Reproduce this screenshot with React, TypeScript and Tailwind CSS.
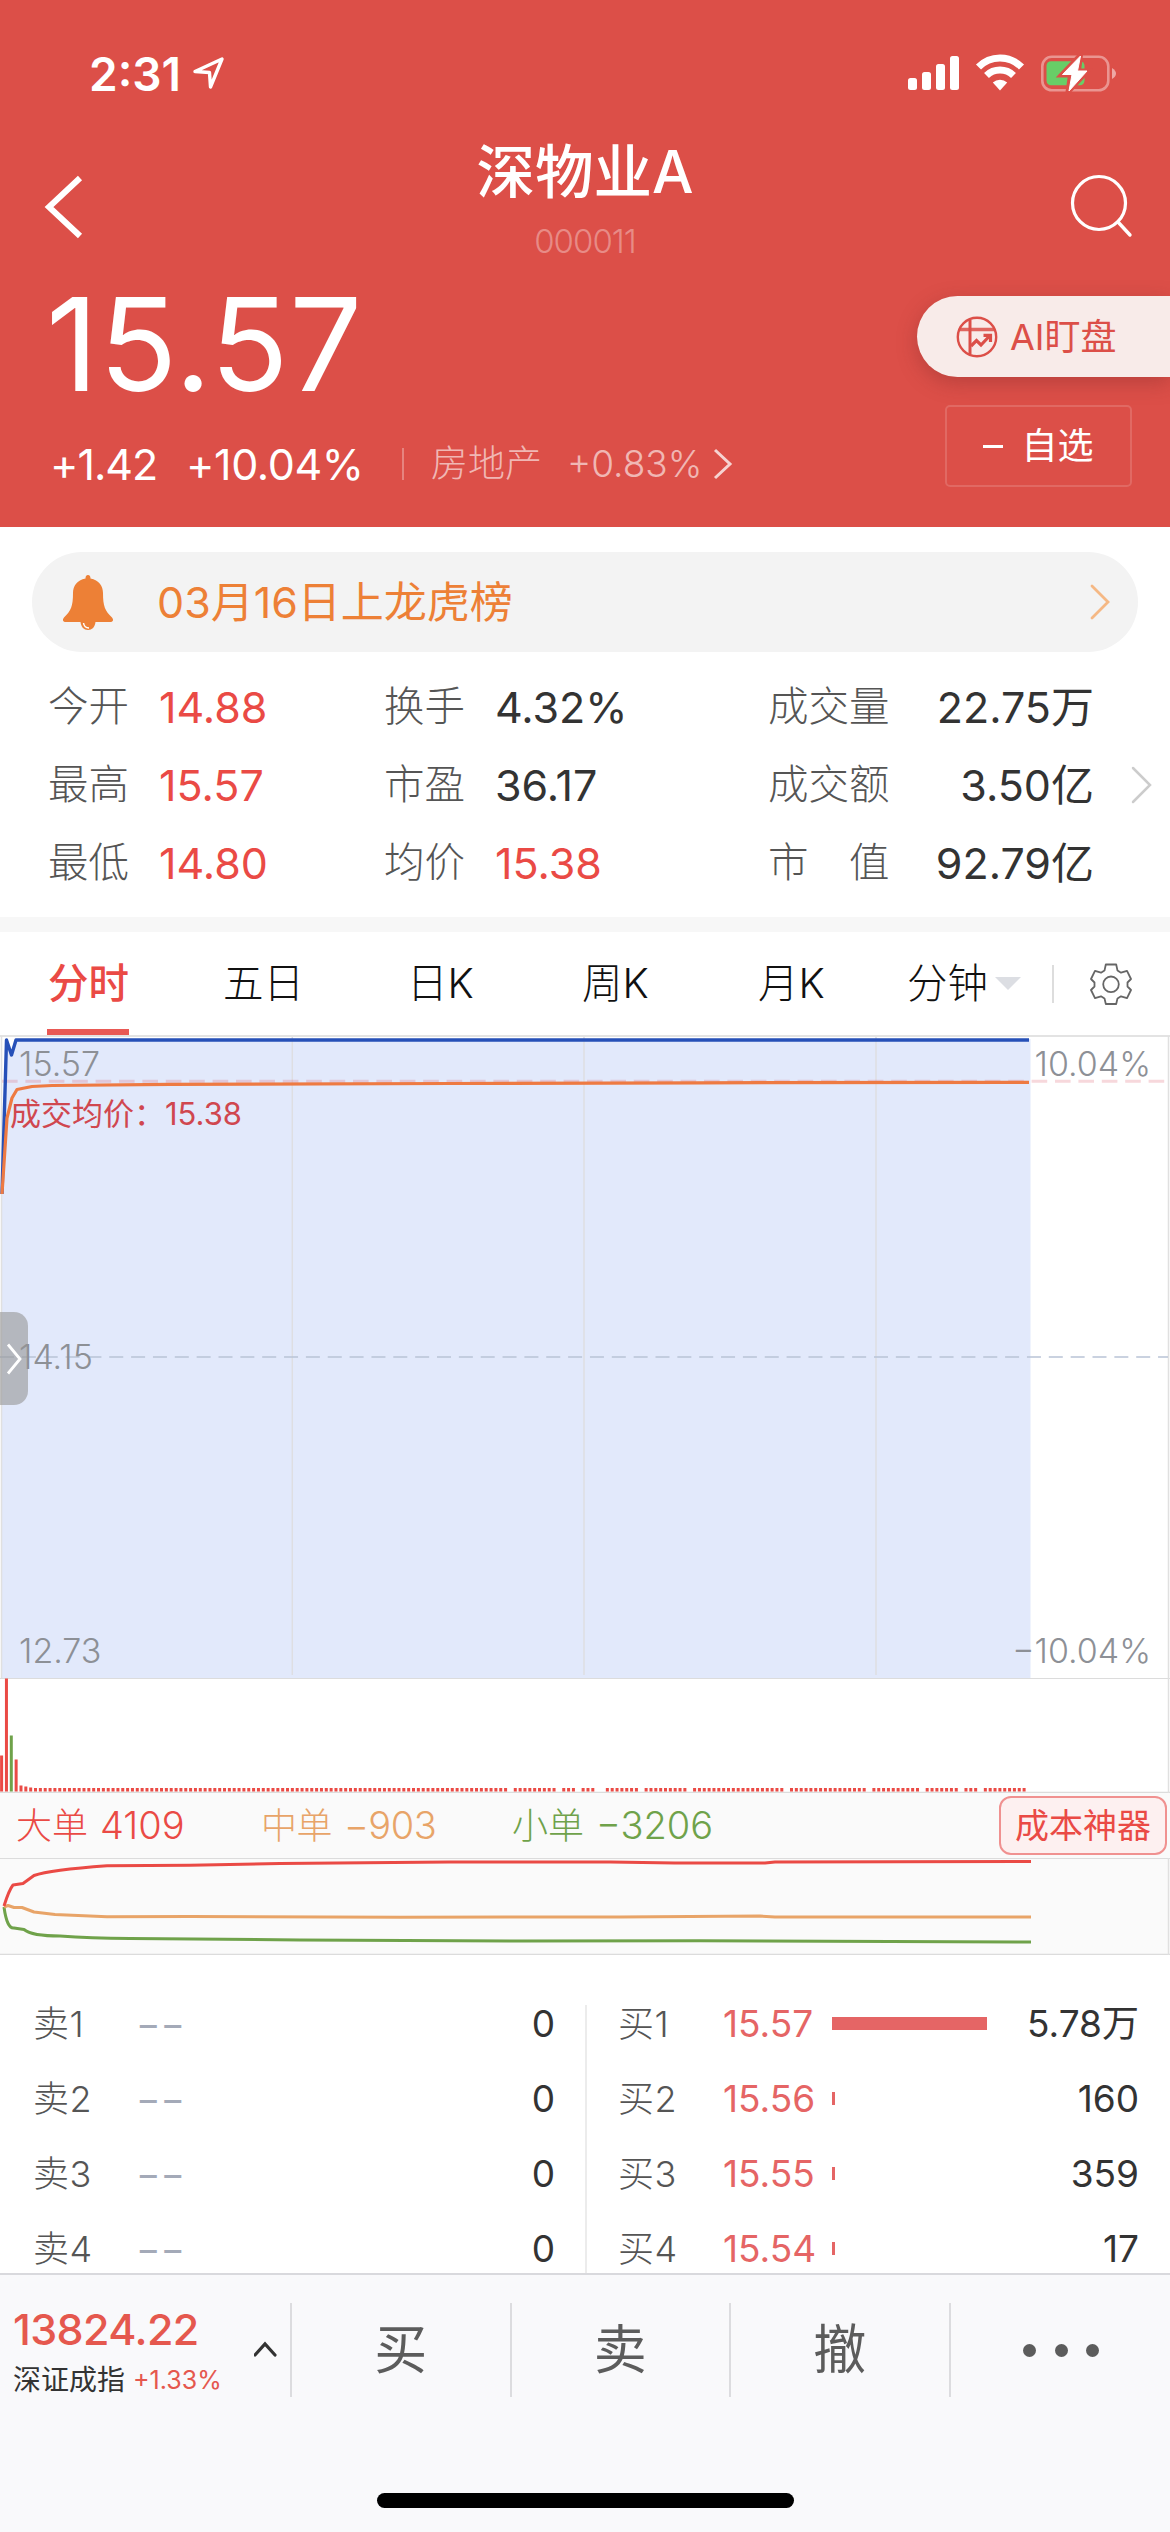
import type { ReactNode } from "react";

const RED = "#ea4a45";
const ORANGE = "#e8a468";
const GREEN = "#6fa24a";

const stats = [
  [
    { label: "今开", value: "14.88", up: true },
    { label: "最高", value: "15.57", up: true },
    { label: "最低", value: "14.80", up: true },
  ],
  [
    { label: "换手", value: "4.32%", up: false },
    { label: "市盈", value: "36.17", up: false },
    { label: "均价", value: "15.38", up: true },
  ],
];

const totals = [
  { label: "成交量", value: "22.75", unit: "万" },
  { label: "成交额", value: "3.50", unit: "亿" },
  { label: "市　值", value: "92.79", unit: "亿" },
];

const sells = ["卖1", "卖2", "卖3", "卖4"];

const buys = [
  { label: "买1", price: "15.57", volume: "5.78", unit: "万", bar: 155 },
  { label: "买2", price: "15.56", volume: "160", unit: "", bar: 3 },
  { label: "买3", price: "15.55", volume: "359", unit: "", bar: 3 },
  { label: "买4", price: "15.54", volume: "17", unit: "", bar: 3 },
];

// minutes without any trade
const emptyMinutes = [105, 115, 119, 123, 124, 132, 142, 162, 179, 190, 198, 202];
const openingBars = [
  { h: 36, color: RED },
  { h: 113, color: RED },
  { h: 56, color: GREEN },
  { h: 32, color: RED },
  { h: 6, color: RED },
  { h: 5, color: RED },
  { h: 4, color: RED },
];

function StatusBar() {
  return (
    <div className="flex h-[130px] items-start justify-between pt-[53px] pr-[53px] pl-[89px]">
      <div className="flex items-start">
        <span className="text-[46px] leading-[42px] font-semibold">2:31</span>
        <svg className="mt-[2px] ml-[11px]" width="34" height="38" viewBox="0 0 34 38" fill="none">
          <path
            d="M3 16.5 L30 4 L18.5 32 L17.5 17.5 Z"
            stroke="white"
            strokeWidth="3.4"
            strokeLinejoin="round"
          />
        </svg>
      </div>
      <div className="flex items-start pt-[1px]">
        <svg width="52" height="38" viewBox="0 0 52 38" fill="white">
          <rect x="0" y="24" width="9" height="12" rx="2.5" />
          <rect x="14" y="18" width="9" height="18" rx="2.5" />
          <rect x="28" y="10" width="9" height="26" rx="2.5" />
          <rect x="42" y="2" width="9" height="34" rx="2.5" />
        </svg>
        <svg className="ml-[15px]" width="50" height="38" viewBox="0 0 50 38">
          <path d="M3.5 13 A30 30 0 0 1 46.5 13" fill="none" stroke="white" strokeWidth="7" />
          <path d="M11.5 21.5 A19.5 19.5 0 0 1 38.5 21.5" fill="none" stroke="white" strokeWidth="7" />
          <path d="M17.8 28.5 A10.5 10.5 0 0 1 32.2 28.5 L25 36.5 Z" fill="white" />
        </svg>
        <svg className="ml-[16px]" width="76" height="38" viewBox="0 0 76 38">
          <rect x="1.3" y="2.8" width="66" height="33.5" rx="9.5" fill="none" stroke="white" strokeOpacity=".4" strokeWidth="2.6" />
          <path d="M71 14 Q75 16.5 75 19.5 Q75 22.5 71 25 Z" fill="white" fillOpacity=".5" />
          <rect x="5.5" y="7.3" width="38" height="24" rx="4.5" fill="#68ce67" />
          <path d="M39.5 1 L20.5 21 H29.5 L27 38 L46.5 17 H37.5 Z" fill="white" stroke="#dc4f48" strokeWidth="5" />
          <path d="M39.5 2 L21.5 20.5 H31 L28 37 L46 17 H36.5 Z" fill="white" stroke="white" strokeLinejoin="round" />
        </svg>
      </div>
    </div>
  );
}

function NavBar() {
  return (
    <div className="grid h-[150px] grid-cols-[200px_1fr_200px]">
      <svg className="mt-[44px] ml-[44px]" width="42" height="66" viewBox="0 0 42 66" fill="none">
        <path d="M36 4 L5 33 L36 62" stroke="white" strokeWidth="6" />
      </svg>
      <div className="flex flex-col items-center">
        <div className="mt-[7px] text-[58.5px] leading-[70px] font-medium">深物业A</div>
        <div className="mt-[16px] text-[33px] leading-[36px] font-light tracking-[-1px] text-white/35">
          000011
        </div>
      </div>
      <svg className="mt-[42px] ml-[99px]" width="66" height="68" viewBox="0 0 66 68" fill="none">
        <circle cx="30" cy="31" r="26.5" stroke="white" strokeWidth="3.2" />
        <path d="M49 50 L61 63" stroke="white" strokeWidth="3.4" strokeLinecap="round" />
      </svg>
    </div>
  );
}

function QuoteSummary() {
  return (
    <div className="flex h-[247px] justify-between">
      <div className="pl-[46px]">
        <div className="mt-[8px] h-[110px] text-[129px] leading-[112px] font-normal tracking-[0.5px]">
          15.57
        </div>
        <div className="mt-[42px] flex h-[48px] items-center leading-[48px]">
          <span className="ml-[4px] w-[136px] text-[43px] font-[370] tracking-[-1px]">+1.42</span>
          <span className="w-[216px] text-[43px] font-[370] tracking-[-0.4px]">+10.04%</span>
          <span className="h-[32px] w-[2px] bg-white/30" />
          <span className="ml-[27px] w-[136px] text-[37px] font-light text-white/60">房地产</span>
          <span className="text-[37px] font-light text-white/60">+0.83%</span>
          <svg className="ml-[11px]" width="20" height="34" viewBox="0 0 20 34" fill="none">
            <path d="M2 3 L17 17 L2 31" stroke="white" strokeOpacity=".75" strokeWidth="3" />
          </svg>
        </div>
      </div>
      <div className="flex flex-col items-end">
        <div className="mt-[16px] flex h-[81px] w-[253px] items-center rounded-l-full bg-[#f8ebe9] pl-[39px] text-[#dc4f48] shadow-[0_6px_20px_rgba(120,40,40,0.35)]">
          <svg width="42" height="42" viewBox="0 0 42 42" fill="none" stroke="currentColor" strokeWidth="2.4">
            <circle cx="21" cy="21" r="19.2" />
            <path d="M14 4 V38" strokeWidth="3" />
            <path d="M4 13.5 H38" strokeWidth="3.4" strokeOpacity=".85" />
            <path d="M15 30 L20.5 24.5 L25 29 L33 20.5" strokeWidth="3.2" />
            <path d="M27.5 19.3 H34.5 V26" strokeWidth="3.2" />
          </svg>
          <span className="ml-[12px] text-[36px] font-[370]">AI盯盘</span>
        </div>
        <div className="mt-[28px] mr-[38px] flex h-[82px] w-[187px] items-center justify-center rounded-[5px] border-2 border-white/15">
          <span className="h-[3px] w-[20px] bg-white" />
          <span className="ml-[18px] text-[36px]">自选</span>
        </div>
      </div>
    </div>
  );
}

function NoticeBar() {
  return (
    <div className="mx-[32px] mt-[25px] flex h-[100px] items-center rounded-full bg-[#f3f3f3] pr-[26px] pl-[30px] text-[#ed8036]">
      <svg width="52" height="58" viewBox="0 0 52 58" fill="currentColor">
        <path d="M26 2 C27.8 2 28.5 3.2 28.5 5.5 C37 7 41 13 41 20 C41 33 43 38 50 44.5 C52 47 51 49 48 49 H4 C1 49 0 47 2 44.5 C9 38 11 33 11 20 C11 13 15 7 23.5 5.5 C23.5 3.2 24.2 2 26 2 Z" />
        <path d="M18.5 49 C19 54 22 57 26 57 C30 57 33 54 33.5 49 Z" />
        <path d="M21.5 50 C22 53 24 55 27 55" fill="none" stroke="#fff" strokeWidth="1.5" />
      </svg>
      <span className="ml-[43px] text-[43px] font-[370]">03月16日上龙虎榜</span>
      <svg className="ml-auto" width="24" height="38" viewBox="0 0 24 38" fill="none">
        <path d="M4 3 L20 19 L4 35" stroke="#f5b884" strokeWidth="2.8" strokeLinecap="round" />
      </svg>
    </div>
  );
}

function StatLabel({ children }: { children: ReactNode }) {
  return <span className="w-[111px] text-[40.5px] font-light text-[#555]">{children}</span>;
}

function Stats() {
  return (
    <div className="flex h-[265px] items-start pt-[16px] pl-[48px] leading-[78px]">
      {stats.map((col, i) => (
        <div key={i} className={i === 0 ? "w-[336px]" : "w-[384px]"}>
          {col.map((s) => (
            <div key={s.label} className="flex h-[78px]">
              <StatLabel>{s.label}</StatLabel>
              <span className={`text-[43px] font-[370] ${s.up ? "text-[#ea4a45]" : "text-[#333]"}`}>
                {s.value}
              </span>
            </div>
          ))}
        </div>
      ))}
      <div className="w-[326px]">
        {totals.map((s) => (
          <div key={s.label} className="flex h-[78px] justify-between">
            <StatLabel>{s.label}</StatLabel>
            <span className="text-[43px] font-[370] text-[#333]">
              {s.value}
              {s.unit}
            </span>
          </div>
        ))}
      </div>
      <svg className="mt-[97px] ml-[36px]" width="24" height="40" viewBox="0 0 24 40" fill="none">
        <path d="M3 3 L20 20 L3 37" stroke="#ccc" strokeWidth="2.5" strokeLinecap="round" />
      </svg>
    </div>
  );
}

function Tabs() {
  return (
    <div className="flex h-[103px] items-start text-[40.5px] leading-[103px] font-light text-[#111]">
      <div className="ml-[47px] flex h-[103px] w-[82px] justify-end border-b-[6px] border-[#e95955] font-medium text-[#ea4a45]">
        分时
      </div>
      <span className="ml-[94px] w-[184px]">五日</span>
      <span className="w-[175px]">日K</span>
      <span className="w-[176px]">周K</span>
      <span className="w-[149px]">月K</span>
      <span className="w-[88px]">分钟</span>
      <svg className="mt-[45px]" width="26" height="13" viewBox="0 0 26 13">
        <path d="M0 0 H26 L13 13 Z" fill="#dcdee3" />
      </svg>
      <span className="mt-[33px] ml-[31px] h-[38px] w-[2px] bg-[#ddd]" />
      <svg className="mt-[31px] ml-[36px]" width="42" height="42" viewBox="0 0 42 42" fill="none" stroke="#666" strokeWidth="1.8">
        <path
          strokeLinejoin="round"
          d="M15.8 1.5 H26.2 L27.5 7.6 L31 9.7 L37 7.8 L41 16 L37.5 19.5 V23.5 L41 27 L37 35.2 L31 33.3 L27.5 35.4 L26.2 41 H15.8 L14.5 35.4 L11 33.3 L5 35.2 L1 27 L4.5 23.5 V19.5 L1 16 L5 7.8 L11 9.7 L14.5 7.6 Z"
        />
        <circle cx="21" cy="21.3" r="7.8" />
      </svg>
    </div>
  );
}

function PriceChart() {
  return (
    <div className="relative h-[643px]">
      <svg className="block" width="1170" height="643" viewBox="0 1035 1170 643" fill="none">
        <path d="M2 1194 L6.5 1039 L11.5 1055 L16 1039 H1030.5 V1678 H2 Z" fill="#e2e9fb" />
        <path d="M0 1036 H1170" stroke="#e3e3e3" strokeWidth="2" />
        <path d="M1.5 1036 V1678 M1168.5 1036 V1678" stroke="#e0e0e0" strokeWidth="1.5" />
        <path d="M292.3 1037 V1675 M584 1037 V1675 M876 1037 V1675" stroke="#dedee2" strokeWidth="1.5" />
        <path d="M2 1081.3 H1168" stroke="#dc4f60" strokeOpacity=".22" strokeWidth="3" strokeDasharray="15.6 7.8" />
        <path d="M0 1357 H1168" stroke="#b9c3d6" strokeWidth="1.4" strokeDasharray="14 7.85" />
        <path d="M2 1194 L6.5 1040 L11.5 1055 L16 1040 H1029" stroke="#2650b8" strokeWidth="3.4" strokeLinejoin="round" />
        <path
          d="M2 1194 L7 1118 L12 1098 L17 1089.5 L32 1086.5 L52 1085.5 L170 1084.3 L450 1083.5 L700 1082.8 L1029 1082.3"
          stroke="#ee7a42"
          strokeWidth="3.2"
          strokeLinejoin="round"
        />
      </svg>
      <div className="absolute inset-y-0 left-[19px] flex flex-col text-[34px] leading-[40px] font-light text-[#8d9096]">
        <span className="mt-[9px]">15.57</span>
        <span className="mt-[253px]">14.15</span>
        <span className="mt-[254px]">12.73</span>
      </div>
      <div className="absolute inset-y-0 right-[19px] flex flex-col text-right text-[34px] leading-[40px] font-light text-[#8d9096]">
        <span className="mt-[9px]">10.04%</span>
        <span className="mt-[547px]">−10.04%</span>
      </div>
      <div className="absolute top-[58px] left-[10px] text-[31px] leading-[42px] font-[370] text-[#d0474f]">
        成交均价：15.38
      </div>
      <div className="absolute top-[277px] left-0 flex h-[93px] w-[28px] items-center rounded-r-[14px] bg-[#969696]/60 pl-[6px]">
        <svg width="18" height="34" viewBox="0 0 18 34" fill="none">
          <path d="M2 2.5 L14 17 L2 31.5" stroke="white" strokeWidth="2.8" />
        </svg>
      </div>
    </div>
  );
}

function VolumeChart() {
  const bars = [];
  for (let i = 0; i <= 211; i++) {
    if (emptyMinutes.includes(i)) continue;
    const { h, color } = openingBars[i] ?? { h: 3.5, color: RED };
    bars.push(<rect key={i} x={0.1 + i * 4.846} y={1791.5 - h} width="3" height={h} fill={color} />);
  }
  return (
    <svg className="block" width="1170" height="115" viewBox="0 1678 1170 115">
      <path d="M0 1678.5 H1170 M0 1792.3 H1170" stroke="#dcdcdc" strokeWidth="1.2" />
      <path d="M1168.5 1678 V1793" stroke="#e0e0e0" strokeWidth="1.5" />
      {bars}
    </svg>
  );
}

function FlowItem({ label, value }: { label: string; value: string }) {
  return (
    <>
      <span className="text-[36px]">{label}</span>
      <span className="ml-[12px] text-[38px]">{value}</span>
    </>
  );
}

function OrderFlow() {
  return (
    <div className="bg-[#fafafa]">
      <div className="flex h-[65px] items-center font-light">
        <div className="ml-[16px] flex w-[245px] items-center text-[#ea4a45]">
          <FlowItem label="大单" value="4109" />
        </div>
        <div className="flex w-[251px] items-center tracking-[-0.5px] text-[#e8a468]">
          <FlowItem label="中单" value="−903" />
        </div>
        <div className="flex items-center text-[#6fa24a]">
          <FlowItem label="小单" value="−3206" />
        </div>
        <span className="mr-[3px] ml-auto flex h-[59px] w-[168px] items-center justify-center rounded-[12px] border-2 border-[#f09190] bg-[#fdf0f0] text-[34px] font-normal text-[#ea4a45]">
          成本神器
        </span>
      </div>
      <svg className="block" width="1170" height="97" viewBox="0 1858 1170 97" fill="none" strokeLinejoin="round">
        <path d="M0 1858.5 H1170 M0 1954.3 H1170" stroke="#dcdcdc" strokeWidth="1.2" />
        <path d="M1168.5 1858 V1955" stroke="#e0e0e0" strokeWidth="1.5" />
        <path
          d="M4 1907 Q7 1929 14 1928 L24 1929.5 Q32 1936 60 1936 Q90 1938 130 1938.5 L300 1940 L520 1941 L700 1940.8 L1031 1942"
          stroke={GREEN}
          strokeWidth="3"
        />
        <path
          d="M4 1907 L8 1905.5 L14 1907.5 L22 1907.5 L34 1912 L55 1914.5 L107 1916.8 L190 1916.5 L400 1917.2 L620 1917 L760 1916 L775 1917 L1031 1917"
          stroke={ORANGE}
          strokeWidth="3"
        />
        <path
          d="M4 1906 Q9 1890 13 1885 L23 1883.5 L34 1875.5 Q50 1870 107 1865.8 L190 1865.3 L280 1863.5 L450 1862 L610 1862 L675 1863 L765 1863 L775 1862 L1031 1861.5"
          stroke={RED}
          strokeWidth="3"
        />
      </svg>
    </div>
  );
}

function OrderBook() {
  return (
    <div className="flex h-[318px] overflow-hidden pt-[50px] text-[37px] font-[370]">
      <div className="-mt-[19px] w-[585px]">
        {sells.map((label) => (
          <div key={label} className="flex h-[75px] items-center pr-[30px] pl-[33px]">
            <span className="w-[103px] text-[36px] font-light tracking-[0.5px] text-[#555]">{label}</span>
            <span className="text-[#a4aab8]">−−</span>
            <span className="ml-auto text-[#333]">0</span>
          </div>
        ))}
      </div>
      <div className="h-[268px] w-[2px] bg-[#ececec]" />
      <div className="-mt-[19px] w-[583px]">
        {buys.map((b) => (
          <div key={b.label} className="flex h-[75px] items-center pr-[31px] pl-[31px]">
            <span className="w-[105px] text-[36px] font-light tracking-[0.5px] text-[#555]">{b.label}</span>
            <span className="w-[109px] text-[#e56565]">{b.price}</span>
            <span className="h-[13px] bg-[#e56565]" style={{ width: b.bar }} />
            <span className="ml-auto text-[#333]">
              {b.volume}
              {b.unit}
            </span>
          </div>
        ))}
      </div>
    </div>
  );
}

function BottomBar() {
  return (
    <div className="h-[259px] border-t-2 border-[#d9d9dd] bg-[#f9f9fb] pt-[28px]">
      <div className="flex h-[94px] items-center">
        <div className="w-[254px] pt-[3px] pl-[13px]">
          <div className="text-[43px] leading-[52px] font-medium tracking-[-0.6px] text-[#e5584e]">
            13824.22
          </div>
          <div className="flex items-center pt-[4px] text-[28px] leading-[42px] text-[#333]">
            深证成指
            <span className="ml-[8px] text-[25px] text-[#e5584e]">+1.33%</span>
          </div>
        </div>
        <svg width="36" height="20" viewBox="0 0 36 20" fill="none">
          <path d="M1 15 L11 4 L21 15" stroke="#333" strokeWidth="3.2" strokeLinecap="round" />
        </svg>
        {["买", "卖", "撤"].map((t) => (
          <div
            key={t}
            className="flex h-[94px] w-[219.5px] items-center justify-center border-l-2 border-[#dcdcdf] pt-[2px] text-[53px] text-[#5c5c5c]"
          >
            {t}
          </div>
        ))}
        <div className="flex h-[94px] flex-1 items-center justify-center gap-[18.5px] border-l-2 border-[#dcdcdf] pl-[2px]">
          <span className="h-[13px] w-[13px] rounded-full bg-[#5c5c5c]" />
          <span className="h-[13px] w-[13px] rounded-full bg-[#5c5c5c]" />
          <span className="h-[13px] w-[13px] rounded-full bg-[#5c5c5c]" />
        </div>
      </div>
      <div className="mx-auto mt-[96px] h-[15px] w-[417px] rounded-full bg-black" />
    </div>
  );
}

export default function App() {
  return (
    <div className="h-[2532px] w-[1170px] overflow-hidden bg-white font-['Inter','Noto_Sans_CJK_SC',sans-serif] whitespace-nowrap">
      <header className="bg-[#dc4f48] text-white">
        <StatusBar />
        <NavBar />
        <QuoteSummary />
      </header>
      <NoticeBar />
      <Stats />
      <div className="h-[15px] bg-[#f7f7f7]" />
      <Tabs />
      <PriceChart />
      <VolumeChart />
      <OrderFlow />
      <OrderBook />
      <BottomBar />
    </div>
  );
}
